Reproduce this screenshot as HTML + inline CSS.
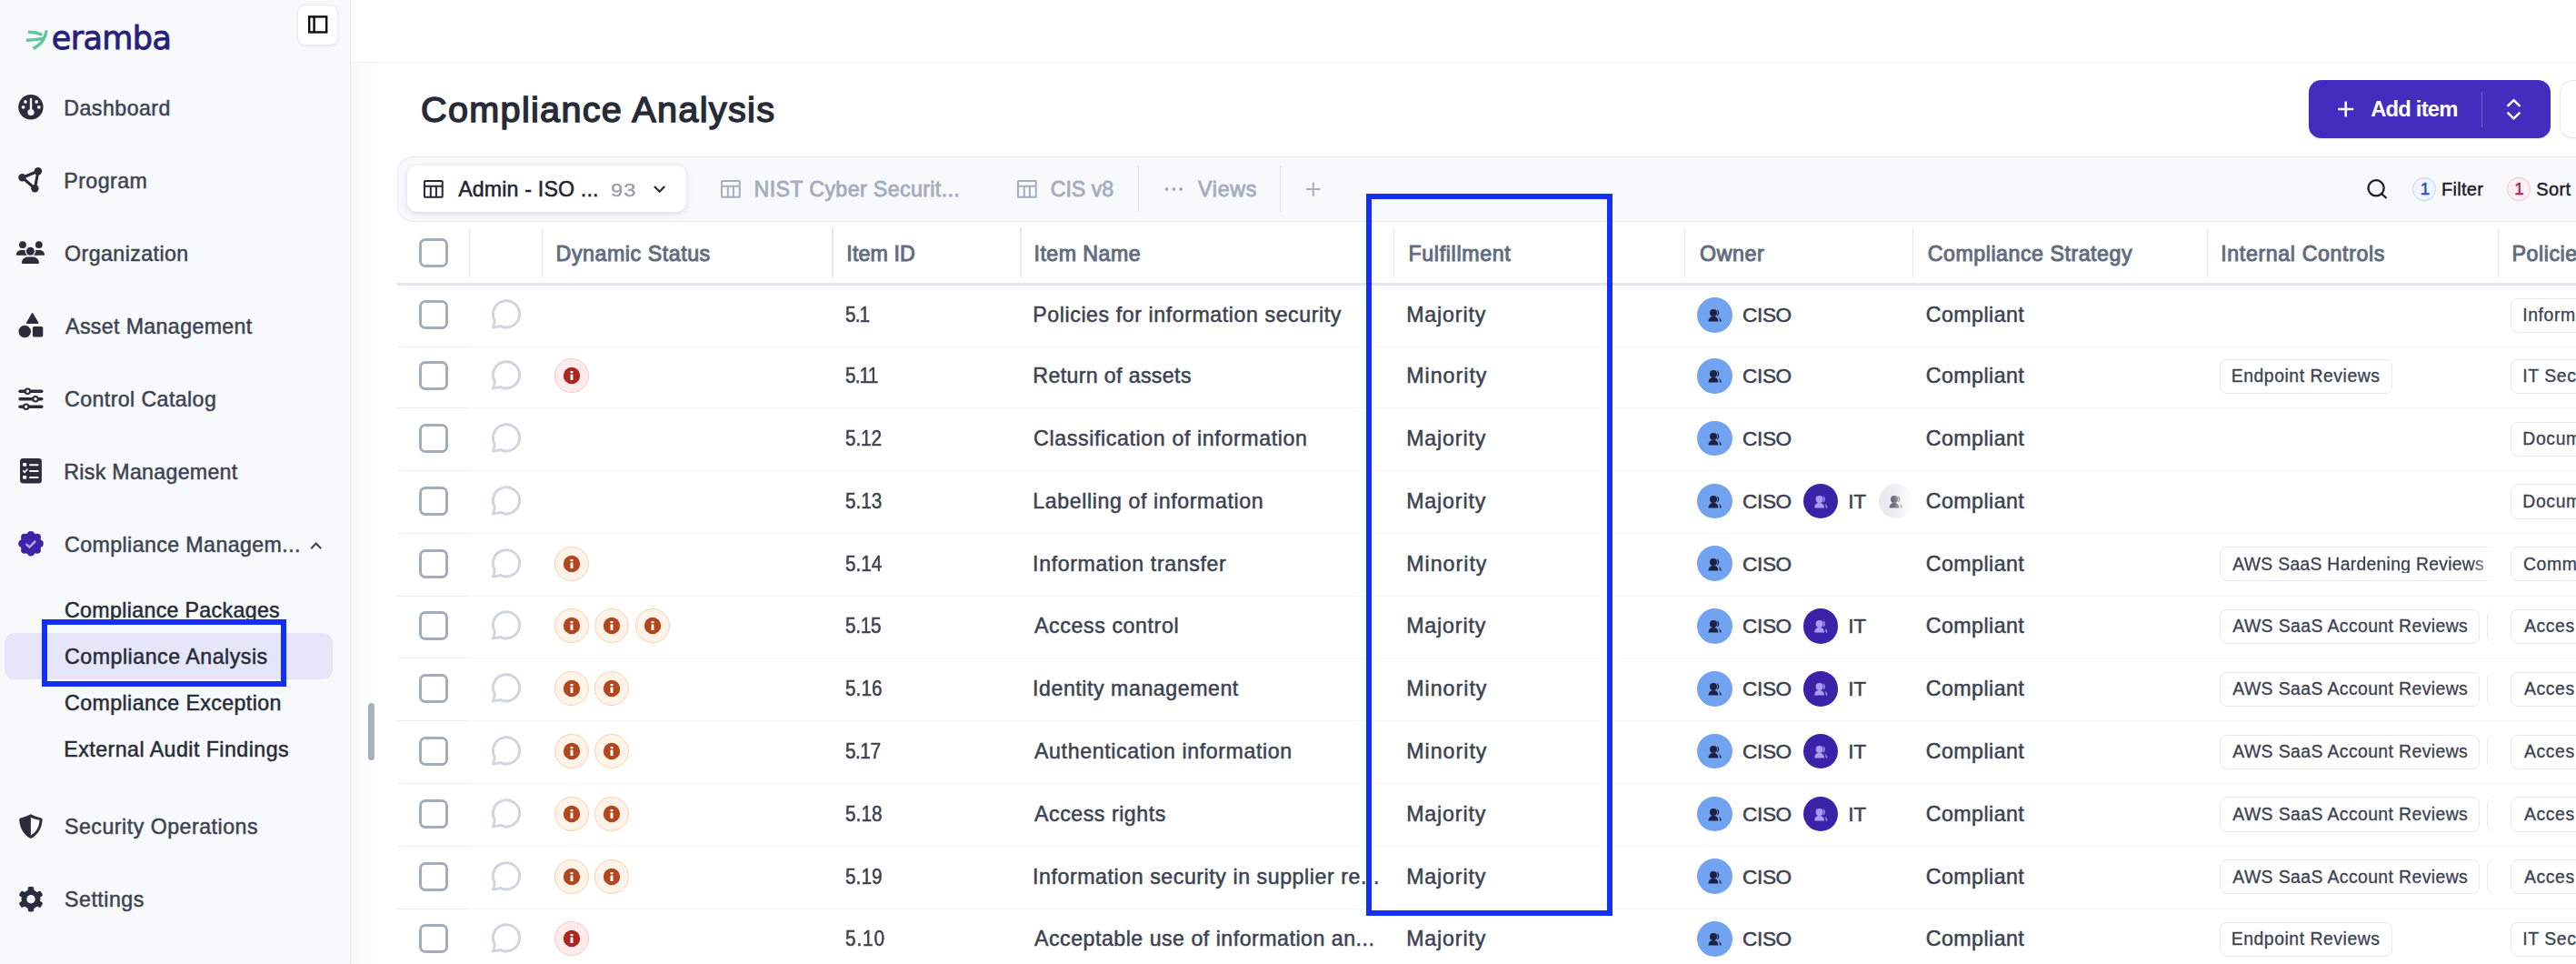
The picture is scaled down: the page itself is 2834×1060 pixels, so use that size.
<!DOCTYPE html>
<html lang="en"><head><meta charset="utf-8"><title>Compliance Analysis</title>
<style>
html,body{margin:0;padding:0;}
body{width:2834px;height:1060px;overflow:hidden;background:#fff;position:relative;font-family:'Liberation Sans', sans-serif;}
.t{position:absolute;white-space:pre;line-height:1;font-family:'Liberation Sans', sans-serif;}
.a{position:absolute;}

.sb{left:0;top:0;width:385px;height:1060px;background:#f8f9fb;border-right:1px solid #e7eaf0;box-sizing:content-box;}
.hl{left:386px;top:68px;width:2448px;height:1px;background:#f0f2f6;}
.shade{left:386px;top:69px;width:37px;height:991px;background:linear-gradient(90deg,rgba(100,105,120,.035),rgba(100,105,120,0));}
.cbtn{left:327px;top:5px;width:43px;height:43px;border-radius:9px;background:#fff;border:1px solid #e9ebf1;box-shadow:0 1px 3px rgba(20,30,60,.07);box-sizing:content-box;}
.active{left:5px;top:696px;width:361px;height:51px;border-radius:11px;background:#e6e6fb;}
.bb{border:6px solid #1430f5;box-sizing:border-box;}
.tabbar{left:437px;top:172px;width:2500px;height:72px;border:1.5px solid #e6e9f0;border-radius:17px;background:#f8f9fb;box-sizing:border-box;}
.atab{left:448px;top:182px;width:307px;height:51px;border-radius:10px;background:#fff;box-shadow:0 2px 7px rgba(20,30,60,.13),0 0 1px rgba(20,30,60,.12);}
.vd{width:1.5px;background:#dfe3ea;}
.cs{width:1.6px;background:#e3e7ee;top:250px;height:55px;}
.hb{left:437px;top:311px;width:2400px;height:3px;background:#e3e8f0;}
.rs{left:517px;width:2320px;height:1px;background:#f5f6fa;}
.rs1{left:437px;width:80px;height:1px;background:#eceff5;}
.cb{left:461px;width:32px;height:32px;border:3px solid #a3acbb;border-radius:7px;box-sizing:border-box;background:#fff;}
.add{left:2540px;top:88px;width:266.2px;height:64px;border-radius:13.6px;background:#442dbe;box-shadow:0 1px 2px rgba(30,20,90,.12);}
.btn2{left:2816.1px;top:88px;width:80px;height:63.8px;border-radius:13.6px;background:#fff;border:1.2px solid #e5e8f1;box-sizing:border-box;box-shadow:0 1px 3px rgba(20,30,60,.06);}
.tag{height:38.3px;border:1.5px solid #e5e8f0;border-radius:8px;box-sizing:border-box;background:#fff;}
.badge{width:38px;height:38px;border-radius:50%;box-sizing:border-box;}
.br{background:#fdeceb;border:1px solid #f9c8c6;}
.bo{background:#fef3e8;border:1px solid #f9d5ac;}
.av{width:38.8px;height:38.8px;border-radius:50%;}
.fb{width:25.5px;height:25.5px;border-radius:50%;box-sizing:border-box;}
.sbar{left:405.4px;top:773px;width:6.5px;height:63.3px;border-radius:3.5px;background:#a9b1bf;}

</style></head><body>
<nav aria-label="Sidebar">
<div class="a sb"></div><div class="a hl"></div><div class="a shade"></div><div class="a cbtn"></div><svg class="a" style="left:338px;top:16px" width="24" height="22" viewBox="0 0 24 22"><rect x="2.2" y="2.4" width="19" height="17" fill="none" stroke="#0c0d10" stroke-width="2.4"/><line x1="7.6" y1="2.4" x2="7.6" y2="19.4" stroke="#0c0d10" stroke-width="2.4"/></svg><svg class="a" style="left:26px;top:30px" width="30" height="28" viewBox="26 30 30 28"><g fill="none" stroke="#5ec89c" stroke-width="3.4" stroke-linecap="butt"><path d="M51.3 33.4 C50 38.5 48.6 47.6 36.6 53.4"/><path d="M31.0 35.3 C35.5 35.2 41 35.8 46.4 38.2"/><path d="M29.0 44.3 C35 44.3 41.5 43.8 48.2 42.2"/></g></svg><div class="a active"></div><svg class="a" style="left:18px;top:102px" width="32" height="32" viewBox="18 102 32 32"><circle cx="33.9" cy="117.7" r="13.7" fill="#2a2d3b"/><g fill="#f8f9fb"><rect x="32.85" y="107.7" width="2.4" height="14" rx="1.2"/><circle cx="34.0" cy="123.5" r="3.6"/><circle cx="27.9" cy="111.9" r="1.85"/><circle cx="40.1" cy="111.9" r="1.85"/><circle cx="25.6" cy="117.8" r="1.85"/><circle cx="42.8" cy="117.8" r="1.85"/></g></svg><svg class="a" style="left:18px;top:182px" width="32" height="32" viewBox="18 182 32 32"><g stroke="#2a2d3b" stroke-width="3.1" fill="none"><path d="M41.9 188.2 L24.5 195.2 L38.4 207.2 Z"/></g><g fill="#2a2d3b"><circle cx="41.9" cy="188.2" r="4.2"/><circle cx="24.5" cy="195.2" r="4.2"/><circle cx="38.4" cy="207.2" r="4.2"/></g></svg><svg class="a" style="left:16px;top:262px" width="36" height="32" viewBox="16 262 36 32"><g fill="#2a2d3b"><circle cx="24.95" cy="269.2" r="3.85"/><circle cx="42.8" cy="269.2" r="3.85"/><path d="M18.9 280.8 Q17.9 280.8 17.9 279.7 C18.1 276.700 20.600 275 23.600 275 H31 V280.8 Z"/><path d="M48 280.8 Q49 280.8 49 279.7 C48.800 276.700 46.300 275 43.300 275 H36 V280.8 Z"/></g><circle cx="33.4" cy="276.25" r="5.8" fill="#f8f9fb"/><g fill="#2a2d3b"><circle cx="33.4" cy="276.25" r="4.5"/><path d="M23.9 288.8 C24.100 284.800 27.400 282.500 30.600 282.500 H36.200 C39.400 282.500 42.800 284.800 43 288.800 Q43 290 41.900 290 H25 Q23.900 290 23.900 288.800 Z"/></g></svg><svg class="a" style="left:18px;top:342px" width="32" height="32" viewBox="18 342 32 32"><g fill="#2a2d3b"><path d="M35.65 345 L41.6 355.1 H29.7 Z" stroke="#2a2d3b" stroke-width="1.7" stroke-linejoin="round"/><circle cx="27.2" cy="364.55" r="6.75"/><rect x="35.9" y="358.95" width="11.4" height="11.45" rx="1.6"/></g></svg><svg class="a" style="left:18px;top:422px" width="32" height="32" viewBox="18 422 32 32"><g stroke="#2a2d3b" stroke-width="3.3" stroke-linecap="round" fill="none"><line x1="22" y1="430.25" x2="45.9" y2="430.25"/><line x1="22" y1="438.75" x2="45.9" y2="438.75"/><line x1="22" y1="447.25" x2="45.9" y2="447.25"/></g><g stroke="#2a2d3b" stroke-width="2.1" fill="#f8f9fb"><circle cx="30.4" cy="430.25" r="2.75"/><circle cx="39.05" cy="438.75" r="2.75"/><circle cx="28.7" cy="447.25" r="2.75"/></g></svg><svg class="a" style="left:18px;top:502px" width="32" height="32" viewBox="18 502 32 32"><rect x="22.0" y="504.1" width="23.9" height="27.4" rx="3.4" fill="#2a2d3b"/><g fill="#f8f9fb"><rect x="25.1" y="509.0" width="4.1" height="3.8" rx=".7"/><rect x="32" y="510.2" width="10.6" height="2" rx="1"/><rect x="32" y="517.1" width="10.600" height="2" rx="1"/><rect x="25.1" y="522.9" width="4.1" height="3.8" rx=".7"/><rect x="32" y="523.9" width="10.600" height="2" rx="1"/></g><path d="M25.3 517.4 l1.9 1.9 l3.1 -3.6" stroke="#f8f9fb" stroke-width="1.7" fill="none"/></svg><svg class="a" style="left:18px;top:582px" width="32" height="32" viewBox="18 582 32 32"><g fill="#3c23aa"><circle cx="34.0" cy="597.7" r="11.7"/><circle cx="43.80" cy="597.70" r="4.0"/><circle cx="40.93" cy="604.63" r="4.0"/><circle cx="34.00" cy="607.50" r="4.0"/><circle cx="27.07" cy="604.63" r="4.0"/><circle cx="24.20" cy="597.70" r="4.0"/><circle cx="27.07" cy="590.77" r="4.0"/><circle cx="34.00" cy="587.90" r="4.0"/><circle cx="40.93" cy="590.77" r="4.0"/></g><path d="M28.6 598.1 l3.8 3.5 l6.600 -6.800" stroke="#b2aaf1" stroke-width="2.5" fill="none"/></svg><svg class="a" style="left:338px;top:592px" width="20" height="16" viewBox="338 592 20 16"><path d="M342.2 603.2 l5.5 -5.6 l5.5 5.6" stroke="#3c4353" stroke-width="2.1" fill="none"/></svg><svg class="a" style="left:18px;top:892px" width="32" height="32" viewBox="18 892 32 32"><path d="M33.9 895.3 C30.5 897.2 26 898.8 22.6 899.4 C21.6 899.6 21.1 900.4 21.2 901.4 C21.9 910.5 25.6 917.6 33.9 922.1 C42.2 917.6 45.9 910.5 46.6 901.4 C46.7 900.4 46.2 899.6 45.2 899.4 C41.8 898.8 37.3 897.2 33.9 895.3 Z" fill="#2a2d3b"/><path d="M33.9 898.7 C36.5 899.9 40 901.1 43.5 901.8 C43.1 909 40.4 914.8 33.9 918.5 Z" fill="#f8f9fb"/></svg><svg class="a" style="left:18px;top:972px" width="32" height="34" viewBox="18 972 32 34"><g fill="#2a2d3b"><rect x="30.75" y="975.1" width="6.5" height="27.4" rx="1.7" transform="rotate(0 34 988.8)"/><rect x="30.75" y="975.1" width="6.5" height="27.4" rx="1.7" transform="rotate(60 34 988.8)"/><rect x="30.75" y="975.1" width="6.5" height="27.4" rx="1.7" transform="rotate(120 34 988.8)"/><circle cx="34" cy="988.8" r="10.5"/></g><circle cx="34" cy="988.8" r="4.7" fill="#f8f9fb"/></svg><div class="a sbar"></div><span class="t" style="left:56.78px;top:25.00px;font-size:35px;font-weight:400;color:#271f7c;letter-spacing:-0.614px;-webkit-text-stroke:0.9px #271f7c;font-family:'DejaVu Sans',sans-serif;">eramba</span><span class="t" style="left:70.29px;top:108.00px;font-size:23.2px;font-weight:400;color:#3c4353;letter-spacing:0.464px;-webkit-text-stroke:0.5px #3c4353;">Dashboard</span><span class="t" style="left:70.29px;top:188.00px;font-size:23.2px;font-weight:400;color:#3c4353;letter-spacing:0.444px;-webkit-text-stroke:0.5px #3c4353;">Program</span><span class="t" style="left:71.11px;top:268.00px;font-size:23.2px;font-weight:400;color:#3c4353;letter-spacing:0.425px;-webkit-text-stroke:0.5px #3c4353;">Organization</span><span class="t" style="left:72.05px;top:348.00px;font-size:23.2px;font-weight:400;color:#3c4353;letter-spacing:0.365px;-webkit-text-stroke:0.5px #3c4353;">Asset Management</span><span class="t" style="left:71.05px;top:428.00px;font-size:23.2px;font-weight:400;color:#3c4353;letter-spacing:0.402px;-webkit-text-stroke:0.5px #3c4353;">Control Catalog</span><span class="t" style="left:70.29px;top:508.00px;font-size:23.2px;font-weight:400;color:#3c4353;letter-spacing:0.293px;-webkit-text-stroke:0.5px #3c4353;">Risk Management</span><span class="t" style="left:71.05px;top:588.00px;font-size:23.2px;font-weight:400;color:#3c4353;letter-spacing:0.404px;-webkit-text-stroke:0.5px #3c4353;">Compliance Managem...</span><span class="t" style="left:71.02px;top:898.00px;font-size:23.2px;font-weight:400;color:#3c4353;letter-spacing:0.494px;-webkit-text-stroke:0.5px #3c4353;">Security Operations</span><span class="t" style="left:71.02px;top:978.00px;font-size:23.2px;font-weight:400;color:#3c4353;letter-spacing:0.503px;-webkit-text-stroke:0.5px #3c4353;">Settings</span><span class="t" style="left:71.05px;top:660.00px;font-size:23.2px;font-weight:400;color:#262b38;letter-spacing:0.331px;-webkit-text-stroke:0.5px #262b38;">Compliance Packages</span><span class="t" style="left:71.05px;top:711.00px;font-size:23.2px;font-weight:400;color:#262b38;letter-spacing:0.511px;-webkit-text-stroke:0.5px #262b38;">Compliance Analysis</span><span class="t" style="left:71.05px;top:762.00px;font-size:23.2px;font-weight:400;color:#262b38;letter-spacing:0.406px;-webkit-text-stroke:0.5px #262b38;">Compliance Exception</span><span class="t" style="left:70.29px;top:813.00px;font-size:23.2px;font-weight:400;color:#262b38;letter-spacing:0.461px;-webkit-text-stroke:0.5px #262b38;">External Audit Findings</span>
</nav>
<header>
<div class="a add"></div><div class="a btn2"></div><svg class="a" style="left:2568px;top:108px" width="26" height="26" viewBox="2568 108 26 26"><path d="M2580.7 111.4 v17 M2572.2 119.9 h17" stroke="#fff" stroke-width="2.5" fill="none"/></svg><div class="a" style="left:2729.7px;top:101px;width:1.3px;height:39px;background:rgba(255,255,255,.28)"></div><svg class="a" style="left:2752px;top:104px" width="28" height="32" viewBox="2752 104 28 32"><path d="M2758.6 116.9 l6.9 -6.7 l6.9 6.700 M2758.6 123.600 l6.9 6.700 l6.9 -6.700" stroke="#fff" stroke-width="2.5" fill="none"/></svg><span class="t" style="left:463.06px;top:101.00px;font-size:39.6px;font-weight:400;color:#272a37;letter-spacing:1.317px;-webkit-text-stroke:1.45px #272a37;">Compliance Analysis</span><span class="t" style="left:2608.15px;top:108.00px;font-size:23.8px;font-weight:700;color:#fff;letter-spacing:-0.795px;">Add item</span>
</header>
<section aria-label="Views">
<div class="a tabbar"></div><div class="a atab"></div><svg class="a" style="left:465.2px;top:197px" width="25" height="23" viewBox="465.2 197 25 23"><g stroke="#252836" stroke-width="2.0" fill="none"><rect x="467.15" y="198.95" width="19.8" height="17.9" rx="0.9"/><line x1="467.15" y1="204.75" x2="486.95" y2="204.75"/><line x1="474.0" y1="204.75" x2="474.0" y2="216.85"/><line x1="480.09999999999997" y1="204.75" x2="480.09999999999997" y2="216.85"/></g></svg><svg class="a" style="left:714px;top:198px" width="24" height="20" viewBox="714 198 24 20"><path d="M720.0 205.0 l5.6 5.7 l5.600 -5.700" stroke="#252836" stroke-width="2.2" fill="none"/></svg><svg class="a" style="left:791.6px;top:197px" width="25" height="23" viewBox="791.6 197 25 23"><g stroke="#a4aebe" stroke-width="2.0" fill="none"><rect x="793.5500000000001" y="198.95" width="19.8" height="17.9" rx="0.9"/><line x1="793.5500000000001" y1="204.75" x2="813.35" y2="204.75"/><line x1="800.4" y1="204.75" x2="800.4" y2="216.85"/><line x1="806.5" y1="204.75" x2="806.5" y2="216.85"/></g></svg><svg class="a" style="left:1117.8px;top:197px" width="25" height="23" viewBox="1117.8 197 25 23"><g stroke="#a4aebe" stroke-width="2.0" fill="none"><rect x="1119.75" y="198.95" width="19.8" height="17.9" rx="0.9"/><line x1="1119.75" y1="204.75" x2="1139.55" y2="204.75"/><line x1="1126.6" y1="204.75" x2="1126.6" y2="216.85"/><line x1="1132.7" y1="204.75" x2="1132.7" y2="216.85"/></g></svg><div class="a vd" style="left:1251.8px;top:182px;height:51px"></div><svg class="a" style="left:1278px;top:200px" width="28" height="16" viewBox="1278 200 28 16"><g fill="#a4aebe"><circle cx="1283.6" cy="208" r="1.9"/><circle cx="1291.4" cy="208" r="1.9"/><circle cx="1299.2" cy="208" r="1.9"/></g></svg><div class="a vd" style="left:1407.8px;top:182px;height:51px"></div><svg class="a" style="left:1432px;top:196px" width="26" height="24" viewBox="1432 196 26 24"><path d="M1444.8 200.4 v15.4 M1437.1 208.1 h15.4" stroke="#a4aebe" stroke-width="2" fill="none"/></svg><svg class="a" style="left:2600px;top:194px" width="30" height="28" viewBox="2600 194 30 28"><circle cx="2614.1" cy="206.8" r="8.6" stroke="#1a1d24" stroke-width="2.3" fill="none"/><path d="M2620.2 213.0 l5.3 5.0" stroke="#1a1d24" stroke-width="2.3" fill="none"/></svg><div class="a fb" style="left:2654.1px;top:195.1px;background:#eff4ff;border:1px solid #bfd4fb"></div><div class="a fb" style="left:2758.1px;top:195.1px;background:#fdeff3;border:1px solid #f6c2d2"></div><span class="t" style="left:504.15px;top:197.00px;font-size:23.2px;font-weight:400;color:#1f2430;letter-spacing:0.163px;-webkit-text-stroke:0.5px #1f2430;">Admin - ISO ...</span><span class="t" style="left:671.56px;top:200.00px;font-size:19.8px;font-weight:400;color:#9a9fa9;letter-spacing:0.874px;-webkit-text-stroke:0.4px #9a9fa9;transform:scaleX(1.2);transform-origin:0 0;">93</span><span class="t" style="left:829.54px;top:197.00px;font-size:23.2px;font-weight:400;color:#a4aebe;letter-spacing:0.379px;-webkit-text-stroke:0.85px #a4aebe;">NIST Cyber Securit...</span><span class="t" style="left:1155.67px;top:197.00px;font-size:23.2px;font-weight:400;color:#a4aebe;letter-spacing:-0.016px;-webkit-text-stroke:0.85px #a4aebe;">CIS v8</span><span class="t" style="left:1318.10px;top:197.00px;font-size:23.2px;font-weight:400;color:#a4aebe;letter-spacing:0.697px;-webkit-text-stroke:0.85px #a4aebe;">Views</span><span class="t" style="left:2662.66px;top:199.00px;font-size:18.8px;font-weight:400;color:#2450c8;letter-spacing:0.000px;-webkit-text-stroke:0.5px #2450c8;">1</span><span class="t" style="left:2685.88px;top:198.00px;font-size:20.0px;font-weight:400;color:#1b1e28;letter-spacing:0.317px;-webkit-text-stroke:0.45px #1b1e28;">Filter</span><span class="t" style="left:2766.26px;top:199.00px;font-size:18.8px;font-weight:400;color:#b22355;letter-spacing:0.000px;-webkit-text-stroke:0.5px #b22355;">1</span><span class="t" style="left:2790.34px;top:198.00px;font-size:20.0px;font-weight:400;color:#1b1e28;letter-spacing:0.334px;-webkit-text-stroke:0.45px #1b1e28;">Sort</span>
</section>
<main aria-label="Compliance Analysis table">
<div class="a hb"></div><div class="a cs" style="left:515.6px"></div><div class="a cs" style="left:595.5px"></div><div class="a cs" style="left:915.4px"></div><div class="a cs" style="left:1122px"></div><div class="a cs" style="left:1532.9px"></div><div class="a cs" style="left:1852.9px"></div><div class="a cs" style="left:2103.9px"></div><div class="a cs" style="left:2427.7px"></div><div class="a cs" style="left:2747.5px"></div><div class="a cb" style="top:262px"></div><div class="a rs" style="top:381px"></div><div class="a rs1" style="top:381px"></div><div class="a rs" style="top:448px"></div><div class="a rs1" style="top:448px"></div><div class="a rs" style="top:517px"></div><div class="a rs1" style="top:517px"></div><div class="a rs" style="top:586px"></div><div class="a rs1" style="top:586px"></div><div class="a rs" style="top:655px"></div><div class="a rs1" style="top:655px"></div><div class="a rs" style="top:723px"></div><div class="a rs1" style="top:723px"></div><div class="a rs" style="top:792px"></div><div class="a rs1" style="top:792px"></div><div class="a rs" style="top:861px"></div><div class="a rs1" style="top:861px"></div><div class="a rs" style="top:930px"></div><div class="a rs1" style="top:930px"></div><div class="a rs" style="top:999px"></div><div class="a rs1" style="top:999px"></div><div class="a cb" style="top:330.2px"></div><svg class="a" style="left:536px;top:326.2px" width="42" height="42" viewBox="536 326.2 42 42"><path d="M544.30 352.70 L542.7 360.20 L551.00 358.80 A14.6 14.6 0 1 0 544.30 352.70 Z" stroke="#cfd6e0" stroke-width="3" fill="none" stroke-linejoin="miter"/></svg><div class="a av" style="left:1867.1px;top:326.9px;background:#72a3f1"></div><svg class="a" style="left:1876px;top:336.2px" width="22" height="20" viewBox="1876 336.2 22 20"><g fill="#1d2142"><circle cx="1885.0" cy="344.2" r="4.0"/><path d="M1879.6 353.8 c0 -3.700 2.200 -5.500 5.400 -5.500 s5.400 1.800 5.400 5.500 z"/><path d="M1889.0 340.5 a4.3 4.3 0 0 1 0 7.6 a9 9 0 0 0 0 -7.600 z"/><path d="M1891.0 349.3 c1.700 0.900 2.700 2.400 2.800 4.500 h-1.600 c-0.100 -1.900 -0.500 -3.300 -1.200 -4.500 z"/></g></svg><div class="a tag" style="left:2762.4px;top:327.7px;width:200px"></div><div class="a cb" style="top:397.1px"></div><svg class="a" style="left:536px;top:393.1px" width="42" height="42" viewBox="536 393.1 42 42"><path d="M544.30 419.60 L542.7 427.10 L551.00 425.70 A14.6 14.6 0 1 0 544.30 419.60 Z" stroke="#cfd6e0" stroke-width="3" fill="none" stroke-linejoin="miter"/></svg><div class="a badge br" style="left:610.2px;top:394.1px"></div><svg class="a" style="left:618.2px;top:402.1px" width="22" height="22" viewBox="618.2 402.1 22 22"><circle cx="629.2" cy="413.1" r="9.2" fill="#a92720"/><g fill="#fff"><rect x="627.75" y="408.15000000000003" width="2.9" height="2.3" rx=".4"/><rect x="627.75" y="411.70000000000005" width="2.9" height="6.4" rx=".3"/></g></svg><div class="a av" style="left:1867.1px;top:393.8px;background:#72a3f1"></div><svg class="a" style="left:1876px;top:403.1px" width="22" height="20" viewBox="1876 403.1 22 20"><g fill="#1d2142"><circle cx="1885.0" cy="411.1" r="4.0"/><path d="M1879.6 420.70000000000005 c0 -3.700 2.200 -5.500 5.400 -5.500 s5.400 1.800 5.400 5.500 z"/><path d="M1889.0 407.40000000000003 a4.3 4.3 0 0 1 0 7.6 a9 9 0 0 0 0 -7.600 z"/><path d="M1891.0 416.20000000000005 c1.700 0.900 2.700 2.400 2.800 4.500 h-1.600 c-0.100 -1.900 -0.500 -3.300 -1.200 -4.500 z"/></g></svg><div class="a tag" style="left:2442.4px;top:394.6px;width:189.6px"></div><div class="a tag" style="left:2762.4px;top:394.6px;width:200px"></div><div class="a cb" style="top:466.0px"></div><svg class="a" style="left:536px;top:462.0px" width="42" height="42" viewBox="536 462.0 42 42"><path d="M544.30 488.50 L542.7 496.00 L551.00 494.60 A14.6 14.6 0 1 0 544.30 488.50 Z" stroke="#cfd6e0" stroke-width="3" fill="none" stroke-linejoin="miter"/></svg><div class="a av" style="left:1867.1px;top:462.7px;background:#72a3f1"></div><svg class="a" style="left:1876px;top:472.0px" width="22" height="20" viewBox="1876 472.0 22 20"><g fill="#1d2142"><circle cx="1885.0" cy="480.0" r="4.0"/><path d="M1879.6 489.6 c0 -3.700 2.200 -5.500 5.400 -5.500 s5.400 1.800 5.400 5.500 z"/><path d="M1889.0 476.3 a4.3 4.3 0 0 1 0 7.6 a9 9 0 0 0 0 -7.600 z"/><path d="M1891.0 485.1 c1.700 0.900 2.700 2.400 2.800 4.500 h-1.600 c-0.100 -1.900 -0.500 -3.300 -1.200 -4.500 z"/></g></svg><div class="a tag" style="left:2762.4px;top:463.5px;width:200px"></div><div class="a cb" style="top:534.8px"></div><svg class="a" style="left:536px;top:530.8px" width="42" height="42" viewBox="536 530.8 42 42"><path d="M544.30 557.30 L542.7 564.80 L551.00 563.40 A14.6 14.6 0 1 0 544.30 557.30 Z" stroke="#cfd6e0" stroke-width="3" fill="none" stroke-linejoin="miter"/></svg><div class="a av" style="left:1867.1px;top:531.5px;background:#72a3f1"></div><svg class="a" style="left:1876px;top:540.8px" width="22" height="20" viewBox="1876 540.8 22 20"><g fill="#1d2142"><circle cx="1885.0" cy="548.8" r="4.0"/><path d="M1879.6 558.4 c0 -3.700 2.200 -5.500 5.400 -5.500 s5.400 1.800 5.400 5.500 z"/><path d="M1889.0 545.0999999999999 a4.3 4.3 0 0 1 0 7.6 a9 9 0 0 0 0 -7.600 z"/><path d="M1891.0 553.9 c1.700 0.900 2.700 2.400 2.800 4.500 h-1.600 c-0.100 -1.900 -0.500 -3.300 -1.200 -4.500 z"/></g></svg><div class="a av" style="left:1983.7px;top:531.5px;background:#3a22a9"></div><svg class="a" style="left:1992px;top:540.8px" width="22" height="20" viewBox="1992 540.8 22 20"><g fill="#a99df2"><circle cx="2001.6" cy="548.8" r="4.0"/><path d="M1996.1999999999998 558.4 c0 -3.700 2.200 -5.500 5.400 -5.500 s5.400 1.800 5.400 5.500 z"/><path d="M2005.6 545.0999999999999 a4.3 4.3 0 0 1 0 7.6 a9 9 0 0 0 0 -7.600 z"/><path d="M2007.6 553.9 c1.700 0.900 2.700 2.400 2.800 4.500 h-1.600 c-0.100 -1.900 -0.500 -3.300 -1.200 -4.500 z"/></g></svg><div class="a av" style="left:2066.6px;top:531.5px;background:linear-gradient(90deg,#e6e8ed 0%,#eceef2 45%,#ffffff 95%)"></div><svg class="a" style="-webkit-mask-image:linear-gradient(90deg,#000 30%,rgba(0,0,0,.35) 90%);left:2076px;top:540.8px" width="22" height="20" viewBox="2076 540.8 22 20"><g fill="#6a6e78"><circle cx="2084.0" cy="548.8" r="4.0"/><path d="M2078.6 558.4 c0 -3.700 2.200 -5.500 5.400 -5.500 s5.400 1.800 5.400 5.500 z"/><path d="M2088.0 545.0999999999999 a4.3 4.3 0 0 1 0 7.6 a9 9 0 0 0 0 -7.600 z"/><path d="M2090.0 553.9 c1.700 0.900 2.700 2.400 2.800 4.500 h-1.600 c-0.100 -1.900 -0.500 -3.300 -1.200 -4.500 z"/></g></svg><div class="a tag" style="left:2762.4px;top:532.3px;width:200px"></div><div class="a cb" style="top:603.6px"></div><svg class="a" style="left:536px;top:599.6px" width="42" height="42" viewBox="536 599.6 42 42"><path d="M544.30 626.10 L542.7 633.60 L551.00 632.20 A14.6 14.6 0 1 0 544.30 626.10 Z" stroke="#cfd6e0" stroke-width="3" fill="none" stroke-linejoin="miter"/></svg><div class="a badge bo" style="left:610.2px;top:600.6px"></div><svg class="a" style="left:618.2px;top:608.6px" width="22" height="22" viewBox="618.2 608.6 22 22"><circle cx="629.2" cy="619.6" r="9.2" fill="#b2461f"/><g fill="#fff"><rect x="627.75" y="614.65" width="2.9" height="2.3" rx=".4"/><rect x="627.75" y="618.2" width="2.9" height="6.4" rx=".3"/></g></svg><div class="a av" style="left:1867.1px;top:600.3000000000001px;background:#72a3f1"></div><svg class="a" style="left:1876px;top:609.6px" width="22" height="20" viewBox="1876 609.6 22 20"><g fill="#1d2142"><circle cx="1885.0" cy="617.6" r="4.0"/><path d="M1879.6 627.2 c0 -3.700 2.200 -5.500 5.400 -5.500 s5.400 1.800 5.400 5.500 z"/><path d="M1889.0 613.9 a4.3 4.3 0 0 1 0 7.6 a9 9 0 0 0 0 -7.600 z"/><path d="M1891.0 622.7 c1.700 0.900 2.700 2.400 2.800 4.500 h-1.600 c-0.100 -1.900 -0.500 -3.300 -1.200 -4.500 z"/></g></svg><div class="a tag" style="left:2442.4px;top:601.1px;width:330px;-webkit-mask-image:linear-gradient(90deg,#000 285px,rgba(0,0,0,0) 304px)"></div><div class="a tag" style="left:2762.4px;top:601.1px;width:200px"></div><div class="a cb" style="top:672.4px"></div><svg class="a" style="left:536px;top:668.4px" width="42" height="42" viewBox="536 668.4 42 42"><path d="M544.30 694.90 L542.7 702.40 L551.00 701.00 A14.6 14.6 0 1 0 544.30 694.90 Z" stroke="#cfd6e0" stroke-width="3" fill="none" stroke-linejoin="miter"/></svg><div class="a badge bo" style="left:610.2px;top:669.4px"></div><svg class="a" style="left:618.2px;top:677.4px" width="22" height="22" viewBox="618.2 677.4 22 22"><circle cx="629.2" cy="688.4" r="9.2" fill="#b2461f"/><g fill="#fff"><rect x="627.75" y="683.4499999999999" width="2.9" height="2.3" rx=".4"/><rect x="627.75" y="687.0" width="2.9" height="6.4" rx=".3"/></g></svg><div class="a badge bo" style="left:654.4000000000001px;top:669.4px"></div><svg class="a" style="left:662.4000000000001px;top:677.4px" width="22" height="22" viewBox="662.4000000000001 677.4 22 22"><circle cx="673.4000000000001" cy="688.4" r="9.2" fill="#b2461f"/><g fill="#fff"><rect x="671.95" y="683.4499999999999" width="2.9" height="2.3" rx=".4"/><rect x="671.95" y="687.0" width="2.9" height="6.4" rx=".3"/></g></svg><div class="a badge bo" style="left:698.6px;top:669.4px"></div><svg class="a" style="left:706.6px;top:677.4px" width="22" height="22" viewBox="706.6 677.4 22 22"><circle cx="717.6" cy="688.4" r="9.2" fill="#b2461f"/><g fill="#fff"><rect x="716.15" y="683.4499999999999" width="2.9" height="2.3" rx=".4"/><rect x="716.15" y="687.0" width="2.9" height="6.4" rx=".3"/></g></svg><div class="a av" style="left:1867.1px;top:669.1px;background:#72a3f1"></div><svg class="a" style="left:1876px;top:678.4px" width="22" height="20" viewBox="1876 678.4 22 20"><g fill="#1d2142"><circle cx="1885.0" cy="686.4" r="4.0"/><path d="M1879.6 696.0 c0 -3.700 2.200 -5.500 5.400 -5.500 s5.400 1.800 5.400 5.500 z"/><path d="M1889.0 682.6999999999999 a4.3 4.3 0 0 1 0 7.6 a9 9 0 0 0 0 -7.600 z"/><path d="M1891.0 691.5 c1.700 0.900 2.700 2.400 2.800 4.500 h-1.600 c-0.100 -1.900 -0.500 -3.300 -1.200 -4.500 z"/></g></svg><div class="a av" style="left:1983.7px;top:669.1px;background:#3a22a9"></div><svg class="a" style="left:1992px;top:678.4px" width="22" height="20" viewBox="1992 678.4 22 20"><g fill="#a99df2"><circle cx="2001.6" cy="686.4" r="4.0"/><path d="M1996.1999999999998 696.0 c0 -3.700 2.200 -5.500 5.400 -5.500 s5.400 1.800 5.400 5.500 z"/><path d="M2005.6 682.6999999999999 a4.3 4.3 0 0 1 0 7.6 a9 9 0 0 0 0 -7.600 z"/><path d="M2007.6 691.5 c1.700 0.900 2.700 2.400 2.800 4.500 h-1.600 c-0.100 -1.900 -0.500 -3.300 -1.200 -4.500 z"/></g></svg><div class="a tag" style="left:2442.4px;top:669.9px;width:285.2px"></div><div class="a tag" style="left:2735.7px;top:669.9px;width:60px;-webkit-mask-image:linear-gradient(90deg,#000 0px,rgba(0,0,0,0) 12px)"></div><div class="a tag" style="left:2762.4px;top:669.9px;width:200px"></div><div class="a cb" style="top:741.2px"></div><svg class="a" style="left:536px;top:737.2px" width="42" height="42" viewBox="536 737.2 42 42"><path d="M544.30 763.70 L542.7 771.20 L551.00 769.80 A14.6 14.6 0 1 0 544.30 763.70 Z" stroke="#cfd6e0" stroke-width="3" fill="none" stroke-linejoin="miter"/></svg><div class="a badge bo" style="left:610.2px;top:738.2px"></div><svg class="a" style="left:618.2px;top:746.2px" width="22" height="22" viewBox="618.2 746.2 22 22"><circle cx="629.2" cy="757.2" r="9.2" fill="#b2461f"/><g fill="#fff"><rect x="627.75" y="752.25" width="2.9" height="2.3" rx=".4"/><rect x="627.75" y="755.8000000000001" width="2.9" height="6.4" rx=".3"/></g></svg><div class="a badge bo" style="left:654.4000000000001px;top:738.2px"></div><svg class="a" style="left:662.4000000000001px;top:746.2px" width="22" height="22" viewBox="662.4000000000001 746.2 22 22"><circle cx="673.4000000000001" cy="757.2" r="9.2" fill="#b2461f"/><g fill="#fff"><rect x="671.95" y="752.25" width="2.9" height="2.3" rx=".4"/><rect x="671.95" y="755.8000000000001" width="2.9" height="6.4" rx=".3"/></g></svg><div class="a av" style="left:1867.1px;top:737.9000000000001px;background:#72a3f1"></div><svg class="a" style="left:1876px;top:747.2px" width="22" height="20" viewBox="1876 747.2 22 20"><g fill="#1d2142"><circle cx="1885.0" cy="755.2" r="4.0"/><path d="M1879.6 764.8000000000001 c0 -3.700 2.200 -5.500 5.400 -5.500 s5.400 1.800 5.400 5.500 z"/><path d="M1889.0 751.5 a4.3 4.3 0 0 1 0 7.6 a9 9 0 0 0 0 -7.600 z"/><path d="M1891.0 760.3000000000001 c1.700 0.900 2.700 2.400 2.800 4.500 h-1.600 c-0.100 -1.900 -0.500 -3.300 -1.200 -4.500 z"/></g></svg><div class="a av" style="left:1983.7px;top:737.9000000000001px;background:#3a22a9"></div><svg class="a" style="left:1992px;top:747.2px" width="22" height="20" viewBox="1992 747.2 22 20"><g fill="#a99df2"><circle cx="2001.6" cy="755.2" r="4.0"/><path d="M1996.1999999999998 764.8000000000001 c0 -3.700 2.200 -5.500 5.400 -5.500 s5.400 1.800 5.400 5.500 z"/><path d="M2005.6 751.5 a4.3 4.3 0 0 1 0 7.6 a9 9 0 0 0 0 -7.600 z"/><path d="M2007.6 760.3000000000001 c1.700 0.900 2.700 2.400 2.800 4.500 h-1.600 c-0.100 -1.900 -0.500 -3.300 -1.200 -4.500 z"/></g></svg><div class="a tag" style="left:2442.4px;top:738.7px;width:285.2px"></div><div class="a tag" style="left:2735.7px;top:738.7px;width:60px;-webkit-mask-image:linear-gradient(90deg,#000 0px,rgba(0,0,0,0) 12px)"></div><div class="a tag" style="left:2762.4px;top:738.7px;width:200px"></div><div class="a cb" style="top:810.0px"></div><svg class="a" style="left:536px;top:806.0px" width="42" height="42" viewBox="536 806.0 42 42"><path d="M544.30 832.50 L542.7 840.00 L551.00 838.60 A14.6 14.6 0 1 0 544.30 832.50 Z" stroke="#cfd6e0" stroke-width="3" fill="none" stroke-linejoin="miter"/></svg><div class="a badge bo" style="left:610.2px;top:807.0px"></div><svg class="a" style="left:618.2px;top:815.0px" width="22" height="22" viewBox="618.2 815.0 22 22"><circle cx="629.2" cy="826.0" r="9.2" fill="#b2461f"/><g fill="#fff"><rect x="627.75" y="821.05" width="2.9" height="2.3" rx=".4"/><rect x="627.75" y="824.6" width="2.9" height="6.4" rx=".3"/></g></svg><div class="a badge bo" style="left:654.4000000000001px;top:807.0px"></div><svg class="a" style="left:662.4000000000001px;top:815.0px" width="22" height="22" viewBox="662.4000000000001 815.0 22 22"><circle cx="673.4000000000001" cy="826.0" r="9.2" fill="#b2461f"/><g fill="#fff"><rect x="671.95" y="821.05" width="2.9" height="2.3" rx=".4"/><rect x="671.95" y="824.6" width="2.9" height="6.4" rx=".3"/></g></svg><div class="a av" style="left:1867.1px;top:806.7px;background:#72a3f1"></div><svg class="a" style="left:1876px;top:816.0px" width="22" height="20" viewBox="1876 816.0 22 20"><g fill="#1d2142"><circle cx="1885.0" cy="824.0" r="4.0"/><path d="M1879.6 833.6 c0 -3.700 2.200 -5.500 5.400 -5.500 s5.400 1.800 5.400 5.500 z"/><path d="M1889.0 820.3 a4.3 4.3 0 0 1 0 7.6 a9 9 0 0 0 0 -7.600 z"/><path d="M1891.0 829.1 c1.700 0.900 2.700 2.400 2.800 4.500 h-1.600 c-0.100 -1.900 -0.500 -3.300 -1.200 -4.500 z"/></g></svg><div class="a av" style="left:1983.7px;top:806.7px;background:#3a22a9"></div><svg class="a" style="left:1992px;top:816.0px" width="22" height="20" viewBox="1992 816.0 22 20"><g fill="#a99df2"><circle cx="2001.6" cy="824.0" r="4.0"/><path d="M1996.1999999999998 833.6 c0 -3.700 2.200 -5.500 5.400 -5.500 s5.400 1.800 5.400 5.500 z"/><path d="M2005.6 820.3 a4.3 4.3 0 0 1 0 7.6 a9 9 0 0 0 0 -7.600 z"/><path d="M2007.6 829.1 c1.700 0.900 2.700 2.400 2.800 4.500 h-1.600 c-0.100 -1.900 -0.500 -3.300 -1.200 -4.500 z"/></g></svg><div class="a tag" style="left:2442.4px;top:807.5px;width:285.2px"></div><div class="a tag" style="left:2735.7px;top:807.5px;width:60px;-webkit-mask-image:linear-gradient(90deg,#000 0px,rgba(0,0,0,0) 12px)"></div><div class="a tag" style="left:2762.4px;top:807.5px;width:200px"></div><div class="a cb" style="top:878.8px"></div><svg class="a" style="left:536px;top:874.8px" width="42" height="42" viewBox="536 874.8 42 42"><path d="M544.30 901.30 L542.7 908.80 L551.00 907.40 A14.6 14.6 0 1 0 544.30 901.30 Z" stroke="#cfd6e0" stroke-width="3" fill="none" stroke-linejoin="miter"/></svg><div class="a badge bo" style="left:610.2px;top:875.8px"></div><svg class="a" style="left:618.2px;top:883.8px" width="22" height="22" viewBox="618.2 883.8 22 22"><circle cx="629.2" cy="894.8" r="9.2" fill="#b2461f"/><g fill="#fff"><rect x="627.75" y="889.8499999999999" width="2.9" height="2.3" rx=".4"/><rect x="627.75" y="893.4" width="2.9" height="6.4" rx=".3"/></g></svg><div class="a badge bo" style="left:654.4000000000001px;top:875.8px"></div><svg class="a" style="left:662.4000000000001px;top:883.8px" width="22" height="22" viewBox="662.4000000000001 883.8 22 22"><circle cx="673.4000000000001" cy="894.8" r="9.2" fill="#b2461f"/><g fill="#fff"><rect x="671.95" y="889.8499999999999" width="2.9" height="2.3" rx=".4"/><rect x="671.95" y="893.4" width="2.9" height="6.4" rx=".3"/></g></svg><div class="a av" style="left:1867.1px;top:875.5px;background:#72a3f1"></div><svg class="a" style="left:1876px;top:884.8px" width="22" height="20" viewBox="1876 884.8 22 20"><g fill="#1d2142"><circle cx="1885.0" cy="892.8" r="4.0"/><path d="M1879.6 902.4 c0 -3.700 2.200 -5.500 5.400 -5.500 s5.400 1.800 5.400 5.500 z"/><path d="M1889.0 889.0999999999999 a4.3 4.3 0 0 1 0 7.6 a9 9 0 0 0 0 -7.600 z"/><path d="M1891.0 897.9 c1.700 0.900 2.700 2.400 2.800 4.500 h-1.600 c-0.100 -1.900 -0.500 -3.300 -1.200 -4.500 z"/></g></svg><div class="a av" style="left:1983.7px;top:875.5px;background:#3a22a9"></div><svg class="a" style="left:1992px;top:884.8px" width="22" height="20" viewBox="1992 884.8 22 20"><g fill="#a99df2"><circle cx="2001.6" cy="892.8" r="4.0"/><path d="M1996.1999999999998 902.4 c0 -3.700 2.200 -5.500 5.400 -5.500 s5.400 1.800 5.400 5.500 z"/><path d="M2005.6 889.0999999999999 a4.3 4.3 0 0 1 0 7.6 a9 9 0 0 0 0 -7.600 z"/><path d="M2007.6 897.9 c1.700 0.900 2.700 2.400 2.800 4.500 h-1.600 c-0.100 -1.900 -0.500 -3.300 -1.200 -4.500 z"/></g></svg><div class="a tag" style="left:2442.4px;top:876.3px;width:285.2px"></div><div class="a tag" style="left:2735.7px;top:876.3px;width:60px;-webkit-mask-image:linear-gradient(90deg,#000 0px,rgba(0,0,0,0) 12px)"></div><div class="a tag" style="left:2762.4px;top:876.3px;width:200px"></div><div class="a cb" style="top:947.6px"></div><svg class="a" style="left:536px;top:943.6px" width="42" height="42" viewBox="536 943.6 42 42"><path d="M544.30 970.10 L542.7 977.60 L551.00 976.20 A14.6 14.6 0 1 0 544.30 970.10 Z" stroke="#cfd6e0" stroke-width="3" fill="none" stroke-linejoin="miter"/></svg><div class="a badge bo" style="left:610.2px;top:944.6px"></div><svg class="a" style="left:618.2px;top:952.6px" width="22" height="22" viewBox="618.2 952.6 22 22"><circle cx="629.2" cy="963.6" r="9.2" fill="#b2461f"/><g fill="#fff"><rect x="627.75" y="958.65" width="2.9" height="2.3" rx=".4"/><rect x="627.75" y="962.2" width="2.9" height="6.4" rx=".3"/></g></svg><div class="a badge bo" style="left:654.4000000000001px;top:944.6px"></div><svg class="a" style="left:662.4000000000001px;top:952.6px" width="22" height="22" viewBox="662.4000000000001 952.6 22 22"><circle cx="673.4000000000001" cy="963.6" r="9.2" fill="#b2461f"/><g fill="#fff"><rect x="671.95" y="958.65" width="2.9" height="2.3" rx=".4"/><rect x="671.95" y="962.2" width="2.9" height="6.4" rx=".3"/></g></svg><div class="a av" style="left:1867.1px;top:944.3000000000001px;background:#72a3f1"></div><svg class="a" style="left:1876px;top:953.6px" width="22" height="20" viewBox="1876 953.6 22 20"><g fill="#1d2142"><circle cx="1885.0" cy="961.6" r="4.0"/><path d="M1879.6 971.2 c0 -3.700 2.200 -5.500 5.400 -5.500 s5.400 1.800 5.400 5.500 z"/><path d="M1889.0 957.9 a4.3 4.3 0 0 1 0 7.6 a9 9 0 0 0 0 -7.600 z"/><path d="M1891.0 966.7 c1.700 0.900 2.700 2.400 2.800 4.500 h-1.600 c-0.100 -1.900 -0.500 -3.300 -1.200 -4.500 z"/></g></svg><div class="a tag" style="left:2442.4px;top:945.1px;width:285.2px"></div><div class="a tag" style="left:2735.7px;top:945.1px;width:60px;-webkit-mask-image:linear-gradient(90deg,#000 0px,rgba(0,0,0,0) 12px)"></div><div class="a tag" style="left:2762.4px;top:945.1px;width:200px"></div><div class="a cb" style="top:1016.4000000000001px"></div><svg class="a" style="left:536px;top:1012.4000000000001px" width="42" height="42" viewBox="536 1012.4000000000001 42 42"><path d="M544.30 1038.90 L542.7 1046.40 L551.00 1045.00 A14.6 14.6 0 1 0 544.30 1038.90 Z" stroke="#cfd6e0" stroke-width="3" fill="none" stroke-linejoin="miter"/></svg><div class="a badge br" style="left:610.2px;top:1013.4000000000001px"></div><svg class="a" style="left:618.2px;top:1021.4000000000001px" width="22" height="22" viewBox="618.2 1021.4000000000001 22 22"><circle cx="629.2" cy="1032.4" r="9.2" fill="#a92720"/><g fill="#fff"><rect x="627.75" y="1027.45" width="2.9" height="2.3" rx=".4"/><rect x="627.75" y="1031.0" width="2.9" height="6.4" rx=".3"/></g></svg><div class="a av" style="left:1867.1px;top:1013.1000000000001px;background:#72a3f1"></div><svg class="a" style="left:1876px;top:1022.4000000000001px" width="22" height="20" viewBox="1876 1022.4000000000001 22 20"><g fill="#1d2142"><circle cx="1885.0" cy="1030.4" r="4.0"/><path d="M1879.6 1040.0 c0 -3.700 2.200 -5.500 5.400 -5.500 s5.400 1.800 5.400 5.500 z"/><path d="M1889.0 1026.7 a4.3 4.3 0 0 1 0 7.6 a9 9 0 0 0 0 -7.600 z"/><path d="M1891.0 1035.5 c1.700 0.900 2.700 2.400 2.800 4.500 h-1.600 c-0.100 -1.900 -0.500 -3.300 -1.200 -4.500 z"/></g></svg><div class="a tag" style="left:2442.4px;top:1013.9000000000001px;width:189.6px"></div><div class="a tag" style="left:2762.4px;top:1013.9000000000001px;width:200px"></div><span class="t" style="left:611.58px;top:268.00px;font-size:23.2px;font-weight:400;color:#636c7f;letter-spacing:0.559px;-webkit-text-stroke:0.95px #636c7f;">Dynamic Status</span><span class="t" style="left:931.35px;top:268.00px;font-size:23.2px;font-weight:400;color:#636c7f;letter-spacing:0.131px;-webkit-text-stroke:0.95px #636c7f;">Item ID</span><span class="t" style="left:1137.55px;top:268.00px;font-size:23.2px;font-weight:400;color:#636c7f;letter-spacing:0.450px;-webkit-text-stroke:0.95px #636c7f;">Item Name</span><span class="t" style="left:1549.49px;top:268.00px;font-size:23.2px;font-weight:400;color:#636c7f;letter-spacing:0.665px;-webkit-text-stroke:0.95px #636c7f;">Fulfillment</span><span class="t" style="left:1870.06px;top:268.00px;font-size:23.2px;font-weight:400;color:#636c7f;letter-spacing:0.594px;-webkit-text-stroke:0.95px #636c7f;">Owner</span><span class="t" style="left:2120.81px;top:268.00px;font-size:23.2px;font-weight:400;color:#636c7f;letter-spacing:0.526px;-webkit-text-stroke:0.95px #636c7f;">Compliance Strategy</span><span class="t" style="left:2443.25px;top:268.00px;font-size:23.2px;font-weight:400;color:#636c7f;letter-spacing:0.625px;-webkit-text-stroke:0.95px #636c7f;">Internal Controls</span><span class="t" style="left:2763.59px;top:268.00px;font-size:23.2px;font-weight:400;color:#636c7f;letter-spacing:0.551px;-webkit-text-stroke:0.95px #636c7f;">Policies</span><span class="t" style="left:930.38px;top:335.00px;font-size:23.2px;font-weight:400;color:#3b4252;letter-spacing:-1.027px;-webkit-text-stroke:0.5px #3b4252;transform:scaleX(0.9);transform-origin:0 0;">5.1</span><span class="t" style="left:1136.29px;top:335.00px;font-size:23.2px;font-weight:400;color:#3b4252;letter-spacing:0.568px;-webkit-text-stroke:0.5px #3b4252;">Policies for information security</span><span class="t" style="left:1547.19px;top:335.00px;font-size:23.2px;font-weight:400;color:#3b4252;letter-spacing:0.857px;-webkit-text-stroke:0.5px #3b4252;">Majority</span><span class="t" style="left:1917.09px;top:336.00px;font-size:22.6px;font-weight:400;color:#3b4252;letter-spacing:-0.387px;-webkit-text-stroke:0.5px #3b4252;">CISO</span><span class="t" style="left:2118.75px;top:335.00px;font-size:23.2px;font-weight:400;color:#3b4252;letter-spacing:0.454px;-webkit-text-stroke:0.5px #3b4252;">Compliant</span><span class="t" style="left:2775.19px;top:337.00px;font-size:19.4px;font-weight:400;color:#3b4252;letter-spacing:0.000px;-webkit-text-stroke:0.3px #3b4252;letter-spacing:0.6px;">Inform</span><span class="t" style="left:930.38px;top:402.00px;font-size:23.2px;font-weight:400;color:#3b4252;letter-spacing:-1.015px;-webkit-text-stroke:0.5px #3b4252;transform:scaleX(0.9);transform-origin:0 0;">5.11</span><span class="t" style="left:1136.29px;top:402.00px;font-size:23.2px;font-weight:400;color:#3b4252;letter-spacing:0.357px;-webkit-text-stroke:0.5px #3b4252;">Return of assets</span><span class="t" style="left:1547.19px;top:402.00px;font-size:23.2px;font-weight:400;color:#3b4252;letter-spacing:1.015px;-webkit-text-stroke:0.5px #3b4252;">Minority</span><span class="t" style="left:1917.09px;top:403.00px;font-size:22.6px;font-weight:400;color:#3b4252;letter-spacing:-0.387px;-webkit-text-stroke:0.5px #3b4252;">CISO</span><span class="t" style="left:2118.75px;top:402.00px;font-size:23.2px;font-weight:400;color:#3b4252;letter-spacing:0.454px;-webkit-text-stroke:0.5px #3b4252;">Compliant</span><span class="t" style="left:2454.75px;top:404.00px;font-size:19.4px;font-weight:400;color:#3b4252;letter-spacing:0.534px;-webkit-text-stroke:0.3px #3b4252;">Endpoint Reviews</span><span class="t" style="left:2775.19px;top:404.00px;font-size:19.4px;font-weight:400;color:#3b4252;letter-spacing:0.000px;-webkit-text-stroke:0.3px #3b4252;letter-spacing:0.6px;">IT Sec</span><span class="t" style="left:930.38px;top:471.00px;font-size:23.2px;font-weight:400;color:#3b4252;letter-spacing:-0.234px;-webkit-text-stroke:0.5px #3b4252;transform:scaleX(0.9);transform-origin:0 0;">5.12</span><span class="t" style="left:1137.05px;top:471.00px;font-size:23.2px;font-weight:400;color:#3b4252;letter-spacing:0.622px;-webkit-text-stroke:0.5px #3b4252;">Classification of information</span><span class="t" style="left:1547.19px;top:471.00px;font-size:23.2px;font-weight:400;color:#3b4252;letter-spacing:0.857px;-webkit-text-stroke:0.5px #3b4252;">Majority</span><span class="t" style="left:1917.09px;top:472.00px;font-size:22.6px;font-weight:400;color:#3b4252;letter-spacing:-0.387px;-webkit-text-stroke:0.5px #3b4252;">CISO</span><span class="t" style="left:2118.75px;top:471.00px;font-size:23.2px;font-weight:400;color:#3b4252;letter-spacing:0.454px;-webkit-text-stroke:0.5px #3b4252;">Compliant</span><span class="t" style="left:2775.35px;top:473.00px;font-size:19.4px;font-weight:400;color:#3b4252;letter-spacing:0.000px;-webkit-text-stroke:0.3px #3b4252;letter-spacing:0.6px;">Docum</span><span class="t" style="left:930.38px;top:540.00px;font-size:23.2px;font-weight:400;color:#3b4252;letter-spacing:-0.067px;-webkit-text-stroke:0.5px #3b4252;transform:scaleX(0.9);transform-origin:0 0;">5.13</span><span class="t" style="left:1136.29px;top:540.00px;font-size:23.2px;font-weight:400;color:#3b4252;letter-spacing:0.591px;-webkit-text-stroke:0.5px #3b4252;">Labelling of information</span><span class="t" style="left:1547.19px;top:540.00px;font-size:23.2px;font-weight:400;color:#3b4252;letter-spacing:0.857px;-webkit-text-stroke:0.5px #3b4252;">Majority</span><span class="t" style="left:1917.09px;top:541.00px;font-size:22.6px;font-weight:400;color:#3b4252;letter-spacing:-0.387px;-webkit-text-stroke:0.5px #3b4252;">CISO</span><span class="t" style="left:2033.24px;top:541.00px;font-size:22.6px;font-weight:400;color:#3b4252;letter-spacing:-0.322px;-webkit-text-stroke:0.5px #3b4252;">IT</span><span class="t" style="left:2118.75px;top:540.00px;font-size:23.2px;font-weight:400;color:#3b4252;letter-spacing:0.454px;-webkit-text-stroke:0.5px #3b4252;">Compliant</span><span class="t" style="left:2775.35px;top:542.00px;font-size:19.4px;font-weight:400;color:#3b4252;letter-spacing:0.000px;-webkit-text-stroke:0.3px #3b4252;letter-spacing:0.6px;">Docum</span><span class="t" style="left:930.38px;top:609.00px;font-size:23.2px;font-weight:400;color:#3b4252;letter-spacing:-0.100px;-webkit-text-stroke:0.5px #3b4252;transform:scaleX(0.9);transform-origin:0 0;">5.14</span><span class="t" style="left:1136.09px;top:609.00px;font-size:23.2px;font-weight:400;color:#3b4252;letter-spacing:0.610px;-webkit-text-stroke:0.5px #3b4252;">Information transfer</span><span class="t" style="left:1547.19px;top:609.00px;font-size:23.2px;font-weight:400;color:#3b4252;letter-spacing:1.015px;-webkit-text-stroke:0.5px #3b4252;">Minority</span><span class="t" style="left:1917.09px;top:610.00px;font-size:22.6px;font-weight:400;color:#3b4252;letter-spacing:-0.387px;-webkit-text-stroke:0.5px #3b4252;">CISO</span><span class="t" style="left:2118.75px;top:609.00px;font-size:23.2px;font-weight:400;color:#3b4252;letter-spacing:0.454px;-webkit-text-stroke:0.5px #3b4252;">Compliant</span><span class="t" style="left:2456.29px;top:611.00px;font-size:19.4px;font-weight:400;color:#3b4252;letter-spacing:0.269px;-webkit-text-stroke:0.3px #3b4252;-webkit-mask-image:linear-gradient(90deg,#000 262px,rgba(0,0,0,.25) 290px);">AWS SaaS Hardening Reviews</span><span class="t" style="left:2775.99px;top:611.00px;font-size:19.4px;font-weight:400;color:#3b4252;letter-spacing:0.000px;-webkit-text-stroke:0.3px #3b4252;letter-spacing:0.6px;">Comm</span><span class="t" style="left:930.38px;top:677.00px;font-size:23.2px;font-weight:400;color:#3b4252;letter-spacing:-0.386px;-webkit-text-stroke:0.5px #3b4252;transform:scaleX(0.9);transform-origin:0 0;">5.15</span><span class="t" style="left:1138.05px;top:677.00px;font-size:23.2px;font-weight:400;color:#3b4252;letter-spacing:0.597px;-webkit-text-stroke:0.5px #3b4252;">Access control</span><span class="t" style="left:1547.19px;top:677.00px;font-size:23.2px;font-weight:400;color:#3b4252;letter-spacing:0.857px;-webkit-text-stroke:0.5px #3b4252;">Majority</span><span class="t" style="left:1917.09px;top:678.00px;font-size:22.6px;font-weight:400;color:#3b4252;letter-spacing:-0.387px;-webkit-text-stroke:0.5px #3b4252;">CISO</span><span class="t" style="left:2033.24px;top:678.00px;font-size:22.6px;font-weight:400;color:#3b4252;letter-spacing:-0.322px;-webkit-text-stroke:0.5px #3b4252;">IT</span><span class="t" style="left:2118.75px;top:677.00px;font-size:23.2px;font-weight:400;color:#3b4252;letter-spacing:0.454px;-webkit-text-stroke:0.5px #3b4252;">Compliant</span><span class="t" style="left:2456.29px;top:679.00px;font-size:19.4px;font-weight:400;color:#3b4252;letter-spacing:0.398px;-webkit-text-stroke:0.3px #3b4252;">AWS SaaS Account Reviews</span><span class="t" style="left:2776.89px;top:679.00px;font-size:19.4px;font-weight:400;color:#3b4252;letter-spacing:0.000px;-webkit-text-stroke:0.3px #3b4252;letter-spacing:0.6px;">Acces</span><span class="t" style="left:930.38px;top:746.00px;font-size:23.2px;font-weight:400;color:#3b4252;letter-spacing:-0.001px;-webkit-text-stroke:0.5px #3b4252;transform:scaleX(0.9);transform-origin:0 0;">5.16</span><span class="t" style="left:1136.09px;top:746.00px;font-size:23.2px;font-weight:400;color:#3b4252;letter-spacing:0.538px;-webkit-text-stroke:0.5px #3b4252;">Identity management</span><span class="t" style="left:1547.19px;top:746.00px;font-size:23.2px;font-weight:400;color:#3b4252;letter-spacing:1.015px;-webkit-text-stroke:0.5px #3b4252;">Minority</span><span class="t" style="left:1917.09px;top:747.00px;font-size:22.6px;font-weight:400;color:#3b4252;letter-spacing:-0.387px;-webkit-text-stroke:0.5px #3b4252;">CISO</span><span class="t" style="left:2033.24px;top:747.00px;font-size:22.6px;font-weight:400;color:#3b4252;letter-spacing:-0.322px;-webkit-text-stroke:0.5px #3b4252;">IT</span><span class="t" style="left:2118.75px;top:746.00px;font-size:23.2px;font-weight:400;color:#3b4252;letter-spacing:0.454px;-webkit-text-stroke:0.5px #3b4252;">Compliant</span><span class="t" style="left:2456.29px;top:748.00px;font-size:19.4px;font-weight:400;color:#3b4252;letter-spacing:0.398px;-webkit-text-stroke:0.3px #3b4252;">AWS SaaS Account Reviews</span><span class="t" style="left:2776.89px;top:748.00px;font-size:19.4px;font-weight:400;color:#3b4252;letter-spacing:0.000px;-webkit-text-stroke:0.3px #3b4252;letter-spacing:0.6px;">Acces</span><span class="t" style="left:930.38px;top:815.00px;font-size:23.2px;font-weight:400;color:#3b4252;letter-spacing:-0.604px;-webkit-text-stroke:0.5px #3b4252;transform:scaleX(0.9);transform-origin:0 0;">5.17</span><span class="t" style="left:1138.05px;top:815.00px;font-size:23.2px;font-weight:400;color:#3b4252;letter-spacing:0.601px;-webkit-text-stroke:0.5px #3b4252;">Authentication information</span><span class="t" style="left:1547.19px;top:815.00px;font-size:23.2px;font-weight:400;color:#3b4252;letter-spacing:1.015px;-webkit-text-stroke:0.5px #3b4252;">Minority</span><span class="t" style="left:1917.09px;top:816.00px;font-size:22.6px;font-weight:400;color:#3b4252;letter-spacing:-0.387px;-webkit-text-stroke:0.5px #3b4252;">CISO</span><span class="t" style="left:2033.24px;top:816.00px;font-size:22.6px;font-weight:400;color:#3b4252;letter-spacing:-0.322px;-webkit-text-stroke:0.5px #3b4252;">IT</span><span class="t" style="left:2118.75px;top:815.00px;font-size:23.2px;font-weight:400;color:#3b4252;letter-spacing:0.454px;-webkit-text-stroke:0.5px #3b4252;">Compliant</span><span class="t" style="left:2456.29px;top:817.00px;font-size:19.4px;font-weight:400;color:#3b4252;letter-spacing:0.398px;-webkit-text-stroke:0.3px #3b4252;">AWS SaaS Account Reviews</span><span class="t" style="left:2776.89px;top:817.00px;font-size:19.4px;font-weight:400;color:#3b4252;letter-spacing:0.000px;-webkit-text-stroke:0.3px #3b4252;letter-spacing:0.6px;">Acces</span><span class="t" style="left:930.38px;top:884.00px;font-size:23.2px;font-weight:400;color:#3b4252;letter-spacing:-0.005px;-webkit-text-stroke:0.5px #3b4252;transform:scaleX(0.9);transform-origin:0 0;">5.18</span><span class="t" style="left:1138.05px;top:884.00px;font-size:23.2px;font-weight:400;color:#3b4252;letter-spacing:0.525px;-webkit-text-stroke:0.5px #3b4252;">Access rights</span><span class="t" style="left:1547.19px;top:884.00px;font-size:23.2px;font-weight:400;color:#3b4252;letter-spacing:0.857px;-webkit-text-stroke:0.5px #3b4252;">Majority</span><span class="t" style="left:1917.09px;top:885.00px;font-size:22.6px;font-weight:400;color:#3b4252;letter-spacing:-0.387px;-webkit-text-stroke:0.5px #3b4252;">CISO</span><span class="t" style="left:2033.24px;top:885.00px;font-size:22.6px;font-weight:400;color:#3b4252;letter-spacing:-0.322px;-webkit-text-stroke:0.5px #3b4252;">IT</span><span class="t" style="left:2118.75px;top:884.00px;font-size:23.2px;font-weight:400;color:#3b4252;letter-spacing:0.454px;-webkit-text-stroke:0.5px #3b4252;">Compliant</span><span class="t" style="left:2456.29px;top:886.00px;font-size:19.4px;font-weight:400;color:#3b4252;letter-spacing:0.398px;-webkit-text-stroke:0.3px #3b4252;">AWS SaaS Account Reviews</span><span class="t" style="left:2776.89px;top:886.00px;font-size:19.4px;font-weight:400;color:#3b4252;letter-spacing:0.000px;-webkit-text-stroke:0.3px #3b4252;letter-spacing:0.6px;">Acces</span><span class="t" style="left:930.38px;top:953.00px;font-size:23.2px;font-weight:400;color:#3b4252;letter-spacing:0.020px;-webkit-text-stroke:0.5px #3b4252;transform:scaleX(0.9);transform-origin:0 0;">5.19</span><span class="t" style="left:1136.09px;top:953.00px;font-size:23.2px;font-weight:400;color:#3b4252;letter-spacing:0.552px;-webkit-text-stroke:0.5px #3b4252;">Information security in supplier re...</span><span class="t" style="left:1547.19px;top:953.00px;font-size:23.2px;font-weight:400;color:#3b4252;letter-spacing:0.857px;-webkit-text-stroke:0.5px #3b4252;">Majority</span><span class="t" style="left:1917.09px;top:954.00px;font-size:22.6px;font-weight:400;color:#3b4252;letter-spacing:-0.387px;-webkit-text-stroke:0.5px #3b4252;">CISO</span><span class="t" style="left:2118.75px;top:953.00px;font-size:23.2px;font-weight:400;color:#3b4252;letter-spacing:0.454px;-webkit-text-stroke:0.5px #3b4252;">Compliant</span><span class="t" style="left:2456.29px;top:955.00px;font-size:19.4px;font-weight:400;color:#3b4252;letter-spacing:0.398px;-webkit-text-stroke:0.3px #3b4252;">AWS SaaS Account Reviews</span><span class="t" style="left:2776.89px;top:955.00px;font-size:19.4px;font-weight:400;color:#3b4252;letter-spacing:0.000px;-webkit-text-stroke:0.3px #3b4252;letter-spacing:0.6px;">Acces</span><span class="t" style="left:930.38px;top:1021.00px;font-size:23.2px;font-weight:400;color:#3b4252;letter-spacing:0.928px;-webkit-text-stroke:0.5px #3b4252;transform:scaleX(0.9);transform-origin:0 0;">5.10</span><span class="t" style="left:1138.05px;top:1021.00px;font-size:23.2px;font-weight:400;color:#3b4252;letter-spacing:0.493px;-webkit-text-stroke:0.5px #3b4252;">Acceptable use of information an...</span><span class="t" style="left:1547.19px;top:1021.00px;font-size:23.2px;font-weight:400;color:#3b4252;letter-spacing:0.857px;-webkit-text-stroke:0.5px #3b4252;">Majority</span><span class="t" style="left:1917.09px;top:1022.00px;font-size:22.6px;font-weight:400;color:#3b4252;letter-spacing:-0.387px;-webkit-text-stroke:0.5px #3b4252;">CISO</span><span class="t" style="left:2118.75px;top:1021.00px;font-size:23.2px;font-weight:400;color:#3b4252;letter-spacing:0.454px;-webkit-text-stroke:0.5px #3b4252;">Compliant</span><span class="t" style="left:2454.75px;top:1023.00px;font-size:19.4px;font-weight:400;color:#3b4252;letter-spacing:0.534px;-webkit-text-stroke:0.3px #3b4252;">Endpoint Reviews</span><span class="t" style="left:2775.19px;top:1023.00px;font-size:19.4px;font-weight:400;color:#3b4252;letter-spacing:0.000px;-webkit-text-stroke:0.3px #3b4252;letter-spacing:0.6px;">IT Sec</span>
</main>

<div class="a bb" style="left:46px;top:681px;width:269.3px;height:74.3px"></div><div class="a bb" style="left:1503px;top:213px;width:271.3px;height:794px"></div>
</body></html>
